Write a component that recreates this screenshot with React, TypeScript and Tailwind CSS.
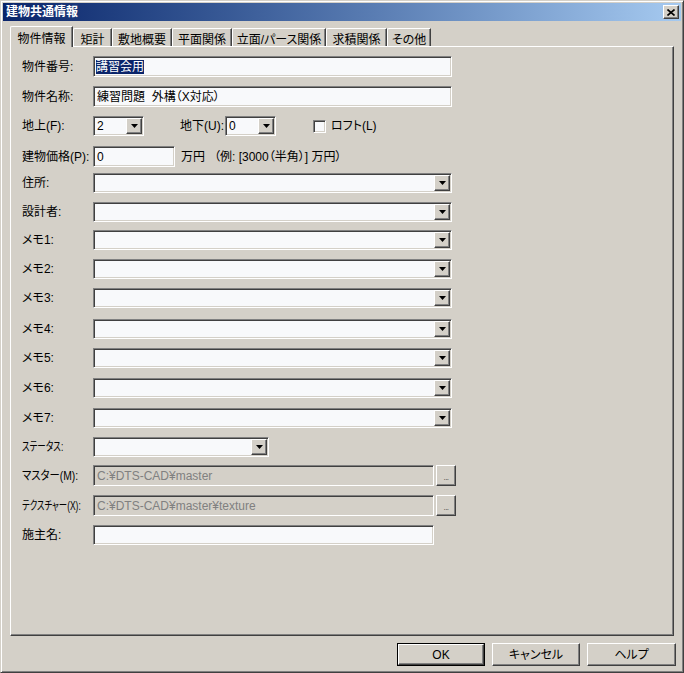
import React from "react";

const sunken =
  "border border-t-[#808080] border-l-[#808080] border-b-white border-r-white shadow-[inset_1px_1px_0_#404040,inset_-1px_-1px_0_#d4d0c8]";
const raised =
  "border border-t-white border-l-white border-b-[#404040] border-r-[#404040] shadow-[inset_-1px_-1px_0_#808080]";

function Arrow() {
  return (
    <svg width="7" height="4" viewBox="0 0 7 4">
      <path d="M0 0H7L3.5 4Z" fill="#000" />
    </svg>
  );
}

function Combo({ width, value = "" }: { width: string; value?: string }) {
  return (
    <div className={`${width} h-[20px] bg-[#f8f9fb] ${sunken} flex items-stretch p-px`}>
      <div className="flex-1 pl-[2px] flex items-center">{value}</div>
      <div className={`w-[16px] bg-[#d4d0c8] ${raised} flex items-center justify-center`}>
        <Arrow />
      </div>
    </div>
  );
}

function Dots() {
  return (
    <div className={`w-[20px] h-[21px] ml-[2px] bg-[#d4d0c8] ${raised} flex items-center justify-center pt-[5px]`}>
      <span className="text-[8px] leading-none text-[#404040] tracking-[-0.5px]">...</span>
    </div>
  );
}

const tabs = [
  { label: "矩計", w: "w-[39px]" },
  { label: "敷地概要", w: "w-[60px]" },
  { label: "平面関係", w: "w-[60px]" },
  { label: "立面/パース関係", w: "w-[94px]" },
  { label: "求積関係", w: "w-[61px]" },
  { label: "その他", w: "w-[44px]" },
];

const comboRows = [
  { label: "住所:", mt: "mt-[6px]" },
  { label: "設計者:", mt: "mt-[9px]" },
  { label: "メモ1:", mt: "mt-[8px]" },
  { label: "メモ2:", mt: "mt-[9px]" },
  { label: "メモ3:", mt: "mt-[9px]" },
  { label: "メモ4:", mt: "mt-[11px]" },
  { label: "メモ5:", mt: "mt-[9px]" },
  { label: "メモ6:", mt: "mt-[10px]" },
  { label: "メモ7:", mt: "mt-[10px]" },
];

export default function App() {
  return (
    <div className="w-[684px] h-[673px] bg-[#d4d0c8] border border-t-[#d4d0c8] border-l-[#d4d0c8] border-b-[#404040] border-r-[#404040] shadow-[inset_1px_1px_0_#ffffff,inset_-1px_-1px_0_#808080] p-[2px] flex flex-col font-['Liberation_Sans','Noto_Sans_CJK_JP',sans-serif] [font-feature-settings:'palt'] text-[12px] text-black overflow-hidden">
      {/* title bar */}
      <div className="h-[18px] bg-gradient-to-r from-[#0a246a] to-[#a6caf0] flex items-center justify-between pl-[3px] pr-[2px]">
        <span className="text-white font-bold text-[12px] leading-none [font-feature-settings:normal]">建物共通情報</span>
        <div className={`w-[16px] h-[14px] bg-[#d4d0c8] ${raised} flex items-center justify-center`}>
          <svg width="8" height="7" viewBox="0 0 8 7">
            <path d="M0.5 0.5L7.5 6.5M7.5 0.5L0.5 6.5" stroke="#000" strokeWidth="1.6" />
          </svg>
        </div>
      </div>

      {/* tabs */}
      <div className="mt-[5px] ml-[7px] h-[20px] flex items-end">
        <div className="relative z-10 -mb-px w-[63px] h-[21px] bg-[#d4d0c8] border-t border-l border-white rounded-tl-[2px] shadow-[inset_-1px_0_0_#808080] border-r border-r-[#404040] flex items-start justify-center pt-[3px]">
          物件情報
        </div>
        {tabs.map((t) => (
          <div
            key={t.label}
            className={`${t.w} h-[18px] border-t border-l border-white border-r border-r-[#404040] shadow-[inset_-1px_0_0_#808080] rounded-tl-[2px] flex items-start justify-center pt-[2px] whitespace-nowrap`}
          >
            {t.label}
          </div>
        ))}
      </div>

      {/* panel */}
      <div className="ml-[7px] mr-[7px] h-[590px] border border-t-white border-l-white border-b-[#404040] border-r-[#404040] shadow-[inset_-1px_-1px_0_#808080] pl-[11px] pt-[9px] flex flex-col">
        <div className="flex items-center h-[21px]">
          <span className="w-[71px]">物件番号:</span>
          <div className={`w-[359px] h-[21px] bg-[#f8f9fb] ${sunken} flex items-center pl-[2px]`}>
            <span className="bg-[#0a246a] text-white leading-[14px]">講習会用</span>
          </div>
        </div>
        <div className="flex items-center h-[21px] mt-[9px]">
          <span className="w-[71px]">物件名称:</span>
          <div className={`w-[359px] h-[21px] bg-[#f8f9fb] ${sunken} flex items-center pl-[3px]`}>
            練習問題&nbsp;&nbsp;外構（X対応）
          </div>
        </div>
        <div className="flex items-center h-[20px] mt-[9px]">
          <span className="w-[71px]">地上(F):</span>
          <Combo width="w-[51px]" value="2" />
          <span className="ml-[36px] w-[45px]">地下(U):</span>
          <Combo width="w-[51px]" value="0" />
          <div className={`ml-[37px] w-[13px] h-[13px] bg-[#f8f9fb] ${sunken}`} />
          <span className="ml-[5px]">ロフト(L)</span>
        </div>
        <div className="flex items-center h-[21px] mt-[10px]">
          <span className="w-[71px]">建物価格(P):</span>
          <div className={`w-[82px] h-[21px] bg-[#f8f9fb] ${sunken} flex items-center pl-[3px]`}>0</div>
          <span className="ml-[6px]">万円</span>
          <span className="ml-[9px]">（例: [3000（半角）] 万円）</span>
        </div>

        {comboRows.map((r) => (
          <div key={r.label} className={`flex items-center h-[20px] ${r.mt}`}>
            <span className="w-[71px]">{r.label}</span>
            <Combo width="w-[359px]" />
          </div>
        ))}

        <div className="flex items-center h-[20px] mt-[9px]">
          <span className="w-[71px] whitespace-nowrap">
            <span className="inline-block origin-left scale-x-[0.71]">ステータス:</span>
          </span>
          <Combo width="w-[176px]" />
        </div>
        <div className="flex items-center h-[21px] mt-[8px]">
          <span className="w-[71px] whitespace-nowrap">
            <span className="inline-block origin-left scale-x-[0.86]">マスター(M):</span>
          </span>
          <div className={`w-[341px] h-[21px] bg-[#d4d0c8] ${sunken} flex items-center pl-[3px] text-[#808080]`}>
            C:¥DTS-CAD¥master
          </div>
          <Dots />
        </div>
        <div className="flex items-center h-[21px] mt-[9px]">
          <span className="w-[71px] whitespace-nowrap">
            <span className="inline-block origin-left scale-x-[0.7]">テクスチャー(X):</span>
          </span>
          <div className={`w-[341px] h-[21px] bg-[#d4d0c8] ${sunken} flex items-center pl-[3px] text-[#808080]`}>
            C:¥DTS-CAD¥master¥texture
          </div>
          <Dots />
        </div>
        <div className="flex items-center h-[20px] mt-[9px]">
          <span className="w-[71px]">施主名:</span>
          <div className={`w-[341px] h-[20px] bg-[#f8f9fb] ${sunken}`} />
        </div>
      </div>

      {/* buttons */}
      <div className="mt-[7px] mr-[5px] flex justify-end gap-[7px]">
        <div className="w-[88px] h-[23px] border border-black">
          <div className={`w-full h-full bg-[#d4d0c8] ${raised} flex items-center justify-center`}>OK</div>
        </div>
        <div className={`w-[88px] h-[23px] bg-[#d4d0c8] ${raised} flex items-center justify-center`}>キャンセル</div>
        <div className={`w-[89px] h-[23px] bg-[#d4d0c8] ${raised} flex items-center justify-center`}>ヘルプ</div>
      </div>
    </div>
  );
}
